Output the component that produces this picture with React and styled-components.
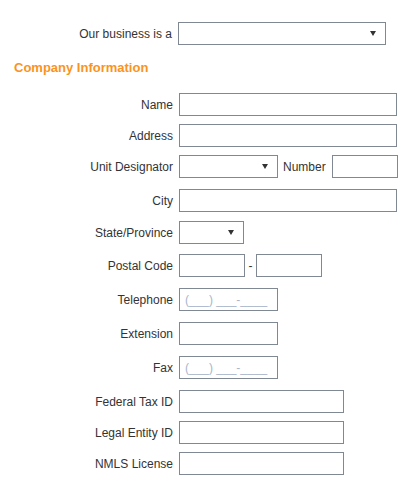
import React from 'react';
import styled, { createGlobalStyle } from 'styled-components';

const GlobalStyle = createGlobalStyle`
  body {
    margin: 0;
    background: #fff;
    font-family: "Liberation Sans", Arial, sans-serif;
    font-size: 12px;
    color: #333;
  }
`;

const Page = styled.div`
  width: 407px;
  padding-top: 22px;
  box-sizing: border-box;
`;

const Row = styled.div`
  display: flex;
  align-items: center;
  height: 23px;
  margin-top: ${(p) => p.$gap || 0}px;
`;

const Label = styled.label`
  width: ${(p) => p.$width || 179}px;
  flex: none;
  text-align: right;
  padding-right: 6px;
  box-sizing: border-box;
  color: #333;
  white-space: nowrap;
`;

const InlineLabel = styled.span`
  margin: 0 6px 0 5px;
  color: #333;
`;

const Dash = styled.span`
  width: 11px;
  text-align: center;
  color: #333;
`;

const Input = styled.input`
  width: ${(p) => p.$w}px;
  height: 23px;
  box-sizing: border-box;
  border: 1px solid #7f8893;
  border-radius: 0;
  padding: 0 5px;
  margin: 0;
  font-family: inherit;
  font-size: 12px;
  color: #333;
  background: #fff;
  outline: none;

  &::placeholder {
    color: #a9b6cb;
  }
`;

const SelectBox = styled.div`
  width: ${(p) => p.$w}px;
  height: 23px;
  box-sizing: border-box;
  border: 1px solid #7f8893;
  background: #fff;
  display: flex;
  align-items: center;
  justify-content: flex-end;
  padding-right: 9px;
`;

const Arrow = styled.span`
  width: 0;
  height: 0;
  border-left: 3px solid transparent;
  border-right: 3px solid transparent;
  border-top: 5px solid #333;
`;

const Heading = styled.h3`
  margin: 15px 0 18px 14px;
  height: 15px;
  line-height: 15px;
  font-size: 13px;
  font-weight: bold;
  color: #fb9322;
`;

const Select = ({ w }) => (
  <SelectBox $w={w}>
    <Arrow />
  </SelectBox>
);

const PHONE = '(___) ___-____';

export default function App() {
  return (
    <Page>
      <GlobalStyle />
      <Row>
        <Label $width={178}>Our business is a</Label>
        <Select w={208} />
      </Row>

      <Heading>Company Information</Heading>

      <Row>
        <Label>Name</Label>
        <Input $w={218} />
      </Row>
      <Row $gap={8}>
        <Label>Address</Label>
        <Input $w={218} />
      </Row>
      <Row $gap={8}>
        <Label>Unit Designator</Label>
        <Select w={99} />
        <InlineLabel>Number</InlineLabel>
        <Input $w={66} />
      </Row>
      <Row $gap={11}>
        <Label>City</Label>
        <Input $w={218} />
      </Row>
      <Row $gap={9}>
        <Label>State/Province</Label>
        <Select w={65} />
      </Row>
      <Row $gap={10}>
        <Label>Postal Code</Label>
        <Input $w={66} />
        <Dash>-</Dash>
        <Input $w={66} />
      </Row>
      <Row $gap={11}>
        <Label>Telephone</Label>
        <Input $w={99} placeholder={PHONE} />
      </Row>
      <Row $gap={11}>
        <Label>Extension</Label>
        <Input $w={99} />
      </Row>
      <Row $gap={11}>
        <Label>Fax</Label>
        <Input $w={99} placeholder={PHONE} />
      </Row>
      <Row $gap={11}>
        <Label>Federal Tax ID</Label>
        <Input $w={165} />
      </Row>
      <Row $gap={8}>
        <Label>Legal Entity ID</Label>
        <Input $w={165} />
      </Row>
      <Row $gap={8}>
        <Label>NMLS License</Label>
        <Input $w={165} />
      </Row>
    </Page>
  );
}
